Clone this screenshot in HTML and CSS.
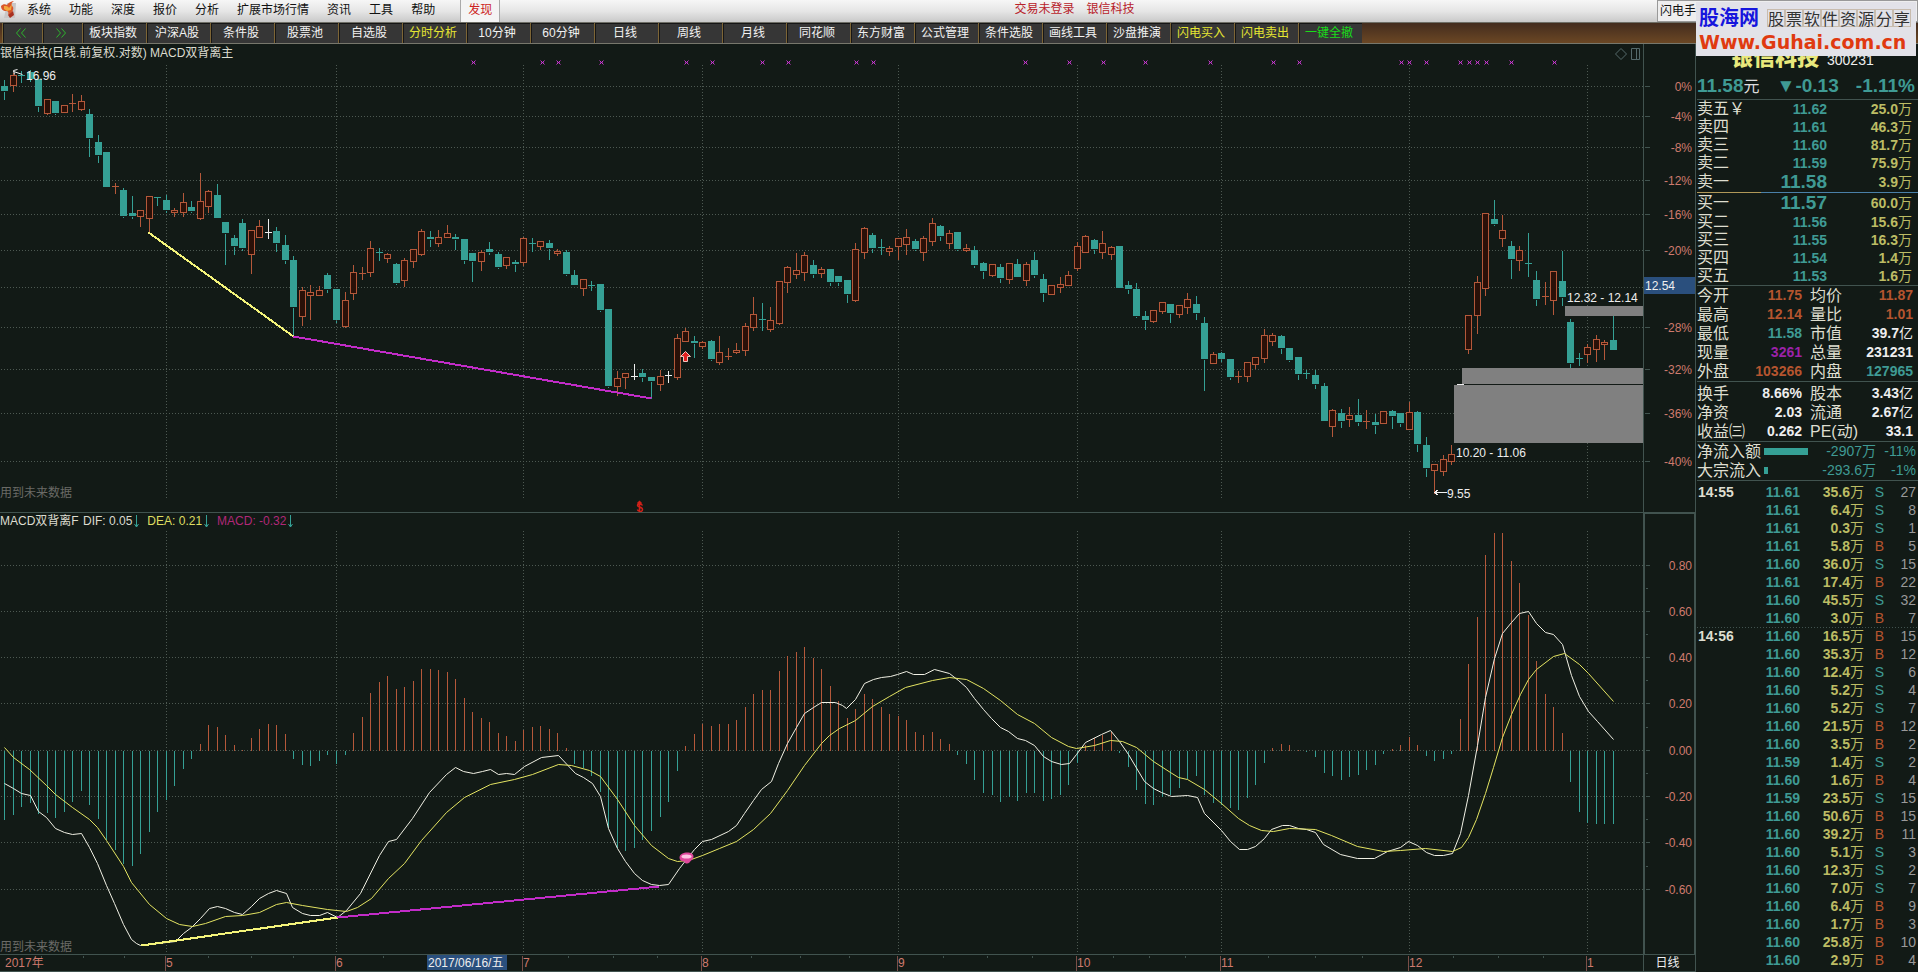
FILE: index.html
```html
<!DOCTYPE html>
<html lang="zh-CN">
<head>
<meta charset="utf-8">
<title>银信科技 300231</title>
<link rel="stylesheet" href="styles.css">
</head>
<body>
<header class="menubar">
  <svg class="logo" viewBox="0 0 18 20" aria-hidden="true">
    <path d="M7 3h9l-1 15H4z" fill="#c9c6c6"/>
    <path d="M1 6c2-2 4-2 6-1 2-3 5-4 7-4-3 2-3 4-1 6 1 3-1 6-5 8 1-3 0-4-2-4-3 0-5-2-5-5z" fill="#d9562a"/>
    <path d="M4 6c2 0 4 0 5 2l3-4-1 6-4 1-3-2z" fill="#f3a63c"/>
    <path d="M8 15l5-4 1 4-4 3z" fill="#a93020"/>
  </svg>
  <nav class="menu">
    <button>系统</button><button>功能</button><button>深度</button><button>报价</button><button>分析</button><button>扩展市场行情</button><button>资讯</button><button>工具</button><button>帮助</button>
    <button class="discover">发现</button>
  </nav>
  <div class="status"><span>交易未登录</span><span>银信科技</span></div>
  <button class="quick">闪电手</button>
</header>

<nav class="toolbar">
  <button class="arrow" aria-label="后退"><svg viewBox="0 0 12 10"><path d="M5.500.5l-4 4.500 4 4.500M10.500.5l-4 4.500 4 4.500"/></svg></button>
  <button class="arrow" aria-label="前进"><svg viewBox="0 0 12 10"><path d="M1.500.5l4 4.500-4 4.500M6.500.5l4 4.500-4 4.500"/></svg></button>
  <button>板块指数</button><button>沪深A股</button><button>条件股</button><button>股票池</button><button>自选股</button><button class="hot">分时分析</button><button>10分钟</button><button>60分钟</button><button>日线</button><button>周线</button><button>月线</button><button>同花顺</button><button>东方财富</button><button>公式管理</button><button>条件选股</button><button>画线工具</button><button>沙盘推演</button><button class="hot">闪电买入</button><button class="hot">闪电卖出</button><button class="go">一键全撤</button>
</nav>

<main class="workspace">
  <section class="charts">
    <div class="pane">
      <svg id="kline"></svg>
      <div class="caption">银信科技(日线.前复权.对数) MACD双背离主</div>
      <svg class="tools" viewBox="0 0 28 14" aria-hidden="true"><path d="M7 1.500L12.500 7 7 12.500 1.500 7zM17.500 1.500h8v11h-8zM22.500 1.500v11"/></svg>
      <div class="note">用到未来数据</div>
    </div>
    <div class="pane scale"><svg id="kscale"></svg></div>
    <div class="pane lower">
      <svg id="macd"></svg>
      <div class="caption legend">
        <span class="title">MACD双背离F</span>
        <span>DIF: 0.05<svg class="down" viewBox="0 0 7 13"><path d="M3.500 0v12M1.500 9l2 3 2-3"/></svg></span>
        <span class="dea">DEA: 0.21<svg class="down" viewBox="0 0 7 13"><path d="M3.500 0v12M1.500 9l2 3 2-3"/></svg></span>
        <span class="mac">MACD: -0.32<svg class="down" viewBox="0 0 7 13"><path d="M3.500 0v12M1.500 9l2 3 2-3"/></svg></span>
      </div>
      <div class="note">用到未来数据</div>
    </div>
    <div class="pane scale boxed"><svg id="mscale"></svg></div>
    <div class="pane dates"><svg id="dates"></svg></div>
    <div class="pane period">日线</div>
  </section>

  <aside class="quote">
    <div class="name"><b>银信科技</b><span>300231</span></div>
    <div class="last"><span>11.58<em>元</em></span><span>▼-0.13</span><span>-1.11%</span></div>
    <table class="book" id="asks"></table>
    <div class="divider"></div>
    <table class="book bids" id="bids"></table>
    <table class="stats">
      <tr><th>今开</th><td class="up">11.75</td><th>均价</th><td class="up">11.87</td></tr>
      <tr><th>最高</th><td class="up">12.14</td><th>量比</th><td class="up">1.01</td></tr>
      <tr><th>最低</th><td class="dn">11.58</td><th>市值</th><td>39.7<em>亿</em></td></tr>
      <tr><th>现量</th><td class="vio">3261</td><th>总量</th><td>231231</td></tr>
      <tr><th>外盘</th><td class="up">103266</td><th>内盘</th><td class="dn">127965</td></tr>
    </table>
    <table class="stats basics">
      <tr><th>换手</th><td>8.66%</td><th>股本</th><td>3.43<em>亿</em></td></tr>
      <tr><th>净资</th><td>2.03</td><th>流通</th><td>2.67<em>亿</em></td></tr>
      <tr><th>收益㈢</th><td>0.262</td><th>PE(动)</th><td>33.1</td></tr>
    </table>
    <table class="flow">
      <tr><th>净流入额</th><td class="meter"><i style="width:44px"></i></td><td>-2907<em>万</em></td><td>-11%</td></tr>
      <tr><th>大宗流入</th><td class="meter"><i style="width:4px"></i></td><td>-293.6<em>万</em></td><td>-1%</td></tr>
    </table>
    <div class="tape"><table id="ticks"></table></div>
  </aside>
</main>

<div class="watermark">
  <div class="brand"><b>股海网</b><span class="slogan"><i>股</i><i>票</i><i>软</i><i>件</i><i>资</i><i>源</i><i>分</i><i>享</i></span></div>
  <a href="#">Www.Guhai.com.cn</a>
</div>
<script src="charts.js"></script>
</body>
</html>
```
FILE: styles.css
```css
:root {
  --bg: #121a16;
  --line: #41534f;
  --teal: #35a095;
  --quote-teal: #3f9a94;
  --orange: #b5552f;
  --yellow: #bcbc64;
  --label: #cf7a6e;
}
* { box-sizing: border-box; }
body {
  margin: 0;
  height: 100vh;
  display: flex;
  flex-direction: column;
  overflow: hidden;
  position: relative;
  background: var(--bg);
  color: #eee;
  font: 12px/18px "Liberation Sans", "Noto Sans CJK SC", sans-serif;
}
button { font: inherit; color: inherit; background: none; border: 0; padding: 0; white-space: nowrap; }
i, em { font-style: normal; }

.menubar {
  display: flex;
  align-items: stretch;
  height: 22px;
  flex: none;
  background: linear-gradient(#f6f6f6, #e6e6e6 50%, #c9c9c9);
  color: #111;
}
.logo { width: 18px; height: 20px; }
.menu { display: flex; }
.menu button { padding: 0 9px 2px; }
.menu .discover { margin-left: 16px; padding: 0 7px 2px; border: 1px solid #aaa; border-width: 0 1px; background: #f4f4f4; color: #c22; }
.status { flex: 1; display: flex; justify-content: center; gap: 12px; color: #b8222a; padding: 0 8px 2px 0; }
.quick { width: 261px; padding: 0 2px; border: 1px solid #999; background: #eee; text-align: left; font-size: 12px; }

.toolbar {
  display: flex;
  height: 22px;
  flex: none;
  border-top: 1px solid #6e6e66;
  border-bottom: 1px solid #77776c;
  background: linear-gradient(#432c1e, #6b4724);
  padding-left: 2px;
}
.toolbar button {
  width: 64px;
  padding-right: 3px;
  background: #363636;
  border-left: 1px solid #7d6536;
  box-shadow: inset 1px 1px #161616;
  color: #f2f2f2;
}
.toolbar .arrow { width: 40px; display: grid; place-items: center; }
.arrow svg { width: 12px; height: 10px; fill: none; stroke: #2db52d; stroke-width: 1; }
.toolbar .hot { color: #e6e632; }
.toolbar .go { color: #19dd19; }

.workspace { flex: 1; min-height: 0; display: flex; }
.charts {
  flex: 1;
  min-width: 0;
  display: grid;
  grid-template-columns: minmax(0, 1fr) 53px;
  grid-template-rows: minmax(0, 468fr) minmax(0, 442fr) 18px;
}
.pane { position: relative; min-width: 0; min-height: 0; overflow: hidden; }
.pane > svg:first-child { display: block; width: 100%; height: 100%; }
.scale { border: 1px solid var(--line); border-width: 0 1px; }
.lower { border-top: 1px solid var(--line); }
.boxed { border-width: 2px 2px 0; }
.dates { border: 1px solid var(--line); border-width: 1px 0; }
.period { border: 1px solid var(--line); line-height: 16px; text-align: center; padding-right: 4px; }
.caption { position: absolute; left: 0; top: 0; color: #dcdcd0; }
.lower .caption { top: -1px; }
.legend { display: flex; gap: 7px; }
.legend span { display: flex; align-items: center; }
.legend .title { width: 76px; white-space: nowrap; }
.legend .dea { color: #dede62; }
.legend .mac { color: #b02878; }
.down { width: 7px; height: 13px; margin-left: 1px; fill: none; stroke: var(--teal); }
.note { position: absolute; left: 0; bottom: 10px; color: #6a6a66; }
.lower .note { bottom: -2px; }
.tools { position: absolute; right: 1px; top: 3px; width: 28px; height: 14px; fill: none; stroke: #55696a; }

.grid { stroke: #4d5952; stroke-dasharray: 1 2; }
.crisp { shape-rendering: crispEdges; }
.t { stroke: var(--teal); fill: var(--teal); }
.r { stroke: #b4583a; fill: #2a1008; }
.w { stroke: #eee; fill: #eee; }
.dif { stroke: #f0f0e4; fill: none; }
.deal { stroke: #e4e462; fill: none; }
.div1 { stroke: #f4f47a; stroke-width: 2; }
.div2 { stroke: #c22cc8; stroke-width: 2; }
.gap { fill: #808080; }
.mark { stroke: #c436cc; fill: none; }
.white { fill: #eee; }
.arrowl { stroke: #eee; fill: none; }
.axis { fill: var(--label); }
.tick { stroke: var(--line); }
.monthline { stroke: #7a4f48; }
.sel { fill: #2a4f7d; }

.quote { width: 222px; flex: none; padding-left: 1px; display: flex; flex-direction: column; overflow: hidden; font-size: 14px; font-weight: bold; }
.quote table { border-collapse: separate; border-spacing: 0; table-layout: fixed; width: 100%; }
.quote th { font-size: 16px; font-weight: normal; text-align: left; padding: 0; white-space: nowrap; color: #deded0; }
.quote td { padding: 0; text-align: right; white-space: nowrap; }
.quote em { font-size: 14px; font-weight: normal; }
.name { height: 27px; padding-left: 34px; display: flex; gap: 8px; align-items: flex-start; line-height: 28px; }
.name b { font-size: 22px; color: #e8e87c; }
.name span { font-weight: normal; line-height: 32px; }
.last { height: 29px; padding-right: 3px; display: flex; justify-content: space-between; font-size: 19px; line-height: 30px; color: var(--quote-teal); border-bottom: 1px solid var(--line); }
.quote .last em { color: #ddd; font-size: 16px; }
.book tr { height: 18px; line-height: 18px; }
.book td:nth-child(2) { width: 70px; color: var(--quote-teal); }
.book td:last-child { width: 91px; padding-right: 6px; color: var(--yellow); }
.book th { width: 60px; }
.book .best td:nth-child(2) { font-size: 19px; }
.book .best { height: 20px; line-height: 20px; }
.divider { height: 1px; flex: none; background: linear-gradient(90deg, #b09858 29%, #4a80a8 29%); }
.bids, .stats, .flow { border-bottom: 1px solid var(--line); }
.basics { margin-top: 2px; }
.stats tr, .flow tr { height: 19px; line-height: 19px; }
.stats th:first-child { width: 48px; }
.stats td:nth-child(2) { width: 57px; }
.stats th:nth-child(3) { padding-left: 8px; width: 60px; }
.stats td:last-child { padding-right: 5px; }
.up { color: var(--orange); }
.dn { color: var(--quote-teal); }
.vio { color: #9b22a8; }
.flow { color: var(--quote-teal); }
.flow th { width: 67px; }
.flow .meter { width: 44px; text-align: left; }
.meter i { display: block; height: 7px; background: var(--teal); }
.flow td:nth-child(3) { width: 68px; }
.flow td, .count { font-weight: normal; }
.flow td:last-child, .tape td:last-child { padding-right: 2px; }
.tape { flex: 1; min-height: 0; overflow: hidden; padding-top: 2px; }
.tape tr { height: 18px; line-height: 18px; }
.tape .minute { background: repeating-linear-gradient(90deg, var(--line) 0 1px, transparent 1px 3px) top / 100% 1px no-repeat; }
.tape th { width: 50px; font-size: 14px; font-weight: bold; padding-left: 1px; }
.tape td:nth-child(2) { width: 53px; color: var(--quote-teal); }
.tape td:nth-child(3) { width: 64px; color: var(--yellow); }
.tape td:nth-child(4) { width: 20px; font-weight: normal; }
.tape .count { color: #999; }

.watermark { position: absolute; right: 2px; top: 2px; width: 220px; height: 54px; padding: 2px 3px; background: #e2e2e8; }
.brand { display: flex; align-items: center; gap: 8px; height: 28px; }
.brand b { font-size: 20px; color: #1616dd; white-space: nowrap; }
.slogan { display: flex; color: #333; }
.slogan i { width: 18px; height: 18px; border: 1px solid #c8bcae; font: 16px/16px "Noto Sans CJK SC", sans-serif; }
.watermark a { display: block; font: bold 19px/20px "DejaVu Sans", sans-serif; color: #e03a10; text-decoration: none; }
```
FILE: charts.js
```js
// Daily bars: colour, high, body top, body bottom, low (plot units)
const bars = `t79,86,91,99 r72,75,85,91 t70,75,76,82 t69,72,79,81 t79,79,106,111 r99,99,113,114 t101,101,113,114 r104,105,112,112 r93,103,104,111 r94,101,109,110
t108,114,138,156 t134,142,155,162 t151,152,187,187 r182,186,187,193 t187,190,216,217 t195,213,216,218 r210,210,216,226 r196,196,218,232 t196,197,198,205 t194,200,210,212
r207,210,212,216 r192,202,212,216 t200,207,211,212 r172,201,218,219 r189,191,206,212 t183,195,218,218 t222,222,233,264 t234,238,246,254 t218,223,248,250 r229,230,254,273
r219,226,237,237 w218,232,233,238 t226,231,243,251 t234,245,260,263 t255,260,307,336 r286,290,316,325 r284,292,295,319 r285,290,295,295 t272,275,289,292 t288,289,320,322
r291,300,326,327 r264,272,293,299 r266,273,274,279 r240,248,272,276 t247,252,253,260 r252,254,258,262 t262,264,283,284 r257,260,280,286 r248,249,261,267 r228,231,254,255
t230,237,239,246 r229,237,243,246 r224,233,237,237 t233,237,239,249 t238,239,260,263 t253,253,261,281 r249,252,261,270 t241,249,252,254 t251,254,267,268 r256,257,265,268
t259,262,264,271 r236,238,262,265 t237,243,244,251 r240,241,246,249 t239,243,248,259 r248,251,253,255 t249,252,274,275 t269,275,285,285 r279,279,288,295 t280,285,286,290
t284,284,310,311 t309,309,386,387 r370,378,386,395 r372,373,377,388 w363,376,377,379 t368,373,377,381 t377,377,381,398 r369,376,384,390 w370,375,376,382 r333,338,377,379
r327,331,341,341 t335,341,343,357 r340,342,346,348 t339,341,359,360 r335,352,362,364 r347,356,357,359 r342,350,352,353 r322,326,350,355 r296,314,327,330 t302,319,320,330
r306,320,329,331 r280,281,323,324 r265,267,282,292 r252,270,274,278 r251,255,272,280 t259,265,274,277 r266,269,273,277 t269,269,282,285 t276,276,282,285 t280,280,294,302
r242,249,300,301 r226,228,252,258 t232,235,248,252 t238,247,248,254 r245,248,251,255 r238,238,246,259 r228,237,244,254 t238,241,249,250 r235,238,252,260 r217,223,241,245
t224,226,236,240 r229,233,243,248 t232,232,249,250 r243,248,250,251 t245,250,265,267 t261,263,271,278 r264,264,275,276 t263,267,278,282 r262,263,279,283 t258,264,277,277
r261,264,280,285 t251,260,275,277 t273,279,293,301 r284,285,294,294 r276,284,287,292 r270,275,285,285 r241,246,268,270 r234,236,252,252 t238,240,249,253 r230,243,252,258
r245,247,254,259 t246,246,288,288 t280,285,289,293 t282,289,316,317 t310,316,320,329 r310,310,321,322 r302,302,311,313 t304,304,313,322 r304,305,314,317 r292,299,307,313
t295,304,313,319 t316,323,359,390 r351,354,363,363 t351,353,359,361 t359,359,377,379 r370,376,377,382 r361,362,376,381 r357,357,364,368 r328,335,358,362 r332,335,341,345
t334,336,348,353 t347,348,360,361 t357,357,374,379 t369,373,374,378 t369,375,384,388 t382,386,421,421 r408,410,426,436 t408,413,421,427 r406,415,419,426 t398,415,422,425
r409,421,422,428 t413,422,425,433 r411,411,423,423 t409,411,416,428 t413,413,423,426 r401,412,429,429 t410,412,444,451 t436,445,468,476 r463,464,470,493 r454,459,471,475
r444,454,461,464 w384,384,385,385 r314,315,349,353 r275,282,315,333 r212,213,288,295 t199,219,224,225 r214,230,238,246 t240,246,259,278 r245,250,260,270 t232,263,264,276
t270,280,299,305 r281,296,297,304 r270,271,300,314 t250,281,297,305 t318,322,363,367 t352,358,359,365 r343,347,354,362 r334,339,349,361 r339,342,344,359 t315,340,350,350`.split(/\s+/)
  .map(s => [s[0], ...s.slice(1).split(',').map(Number)]);

const hist = [-69,-64,-56,-52,-63,-62,-67,-61,-51,-40,-54,-68,-89,-99,-113,-115,-103,-81,-61,-49,-35,-18,-8,7,26,24,16,6,1,13,22,27,26,17,-8,-14,-15,-10,-4,-13,-4,
18,34,58,69,75,62,64,70,82,82,81,79,72,53,39,33,29,18,15,10,21,24,25,22,18,3,-13,-17,-25,-41,-77,-97,-100,-97,-89,-80,-66,-51,-20,5,17,
27,25,27,27,31,44,57,61,61,80,95,99,104,93,82,65,50,33,42,57,52,44,37,35,31,19,16,19,12,7,-4,-13,-29,-42,-44,-51,-46,-50,-42,-42,-50,-48,-44,-34,-12,
6,13,16,19,-2,-16,-39,-53,-54,-46,-44,-37,-28,-25,-44,-52,-54,-57,-59,-47,-34,-12,3,7,6,1,-1,-6,-22,-25,-29,-26,-24,-19,-14,-3,2,6,14,6,-5,-10,-8,-3,
32,87,134,196,218,218,190,168,136,90,57,44,18,-31,-61,-72,-73,-73,-73];

const difLine = `4,783 13,788 21,793 30,795 38,811 46,817 55,828 64,832 72,834 81,833 89,847 97,863 106,885 114,903 123,924 131,939 136,943 140,945 166,942 175,941 183,933 191,927 200,918 209,908 217,906 225,908 234,912 242,914 251,906 259,898 268,893 276,890 286,893 292,907 302,913 310,915 319,915 327,912 337,917 346,910 360,893 379,855 388,841 396,839 412,818 429,792 446,774 455,767 463,771 473,773 482,771 490,769 498,774 506,773 514,774 524,766 541,757 558,755 575,773 583,777 592,783 600,796 608,828 617,848 625,861 634,873 642,880 651,884 659,885 668,884 679,868 686,859 694,849 702,841 711,839 728,831 736,825 744,813 753,800 761,789 771,781 778,763 787,743 796,727 804,713 813,707 821,702 835,702 842,705 846,708 855,699 864,683 873,679 881,677 890,676 897,674 906,671 913,674 924,674 934,669 949,673 958,680 966,687 974,698 983,709 991,718 1000,727 1008,731 1017,738 1025,740 1034,745 1043,756 1051,761 1061,764 1069,763 1076,754 1085,742 1101,734 1110,730 1119,741 1128,754 1144,781 1153,788 1161,792 1171,796 1187,795 1197,797 1204,813 1221,830 1230,841 1239,849 1247,849 1255,846 1264,838 1271,829 1282,825 1289,825 1298,828 1306,829 1315,832 1323,844 1340,854 1357,858 1374,858 1387,851 1400,847 1408,841 1417,845 1426,852 1434,855 1443,855 1452,853 1460,833 1468,795 1477,745 1485,697 1494,658 1502,633 1511,622 1519,613 1528,611 1536,623 1545,632 1553,634 1562,644 1571,675 1579,696 1588,711 1597,721 1613,739`;
const deaLine = `4,747 13,757 29,769 46,785 55,794 72,807 89,819 97,827 106,840 123,866 131,882 149,904 166,918 179,924 192,926 205,923 225,916 242,915 259,912 276,904 286,902 302,905 327,909 346,911 357,907 371,898 388,878 404,863 421,840 446,812 464,797 490,784 514,779 532,774 558,764 571,765 589,770 600,776 617,799 634,825 651,845 668,858 677,861 688,860 702,855 719,848 736,841 753,829 770,813 787,790 804,765 821,743 829,735 839,728 855,720 872,706 889,696 905,687 932,680 949,677 966,679 983,688 1000,700 1017,714 1034,723 1051,737 1068,746 1076,748 1094,745 1110,740 1122,741 1136,747 1153,761 1170,772 1178,777 1187,779 1204,789 1221,803 1238,818 1249,825 1261,830 1273,831 1289,828 1315,829 1331,835 1357,846 1383,851 1400,850 1425,848 1452,851 1461,847 1468,837 1476,819 1485,793 1493,767 1502,737 1511,714 1520,694 1528,679 1536,669 1553,656 1564,653 1579,664 1588,673 1613,701`;

const signals = [473,542,558,601,686,712,762,788,856,873,1025,1069,1103,1145,1210,1273,1299,1401,1409,1426,1460,1469,1477,1486,1511,1554];
const months = [[19,'5'],[39,'6'],[61,'7'],[82,'8'],[105,'9'],[126,'10'],[143,'11'],[165,'12'],[186,'1']];
const percents = [86,116,147,180,214,250,287,327,369,413,461];
const levels = [[565,'0.80'],[611,'0.60'],[657,'0.40'],[703,'0.20'],[750,'0.00'],[796,'-0.20'],[842,'-0.40'],[889,'-0.60']];
const barX = i => 4 + i * 8.513;

// Maps plot units onto the current size of an svg
function surface(id, top, width, height) {
  const el = document.getElementById(id);
  const kx = el.clientWidth / width, ky = el.clientHeight / height;
  const X = v => Math.round(v * kx) + 0.5;
  const Y = v => Math.round((v - top) * ky) + 0.5;
  const out = [];
  return {
    X, Y, out,
    line: (x1, y1, x2, y2, c) => out.push(`<line class="${c}" x1="${X(x1)}" y1="${Y(y1)}" x2="${X(x2)}" y2="${Y(y2)}"/>`),
    text: (x, y, s, c, a = 'start') => out.push(`<text class="${c}" x="${X(x) - 0.5}" y="${Y(y) - 0.5}" text-anchor="${a}">${s}</text>`),
    poly: (pts, c) => out.push(`<polyline class="${c}" points="${pts.split(' ').map(p => { const [x, y] = p.split(','); return X(x) + ',' + Y(y); }).join(' ')}"/>`),
    box: (x1, y1, x2, y2, c) => out.push(`<rect class="${c}" x="${X(x1) - 0.5}" y="${Y(y1) - 0.5}" width="${X(x2) - X(x1)}" height="${Y(y2) - Y(y1)}"/>`),
    flush: () => { el.innerHTML = out.join(''); }
  };
}

function drawKline() {
  const s = surface('kline', 44, 1643, 468);
  percents.forEach(y => s.line(0, y, 1643, y, 'grid crisp'));
  months.forEach(([i]) => s.line(barX(i), 64, barX(i), 498, 'grid crisp'));
  signals.forEach(x => {
    const a = s.X(x), b = s.Y(62);
    s.out.push(`<path class="mark" d="M${a - 2} ${b - 2}l4 4m0-4l-4 4M${a - 1} ${b}h2"/>`);
  });
  bars.forEach(([c, h, t, b, l], i) => {
    const x = s.X(barX(i));
    s.out.push(`<g class="${c} crisp">`);
    if (b - t <= 1) {
      s.out.push(`<path d="M${x - 3.5} ${s.Y(t)}h7M${x} ${s.Y(h)}V${s.Y(l)}"/>`);
    } else {
      s.out.push(`<path d="M${x} ${s.Y(h)}V${s.Y(t)}M${x} ${s.Y(b)}V${s.Y(l)}"/><rect x="${x - 3}" y="${s.Y(t)}" width="6" height="${Math.max(1, s.Y(b) - s.Y(t) - (c === 't' ? 1 : 0))}"/>`);
    }
    s.out.push('</g>');
  });
  s.line(148, 232, 293, 336, 'div1 crisp');
  s.line(293, 336, 651, 398, 'div2 crisp');
  s.box(1565, 306, 1643, 316, 'gap');
  s.box(1462, 368, 1643, 384, 'gap');
  s.box(1454, 385, 1643, 443, 'gap');
  s.text(1567, 302, '12.32 - 12.14', 'white');
  s.text(1456, 457, '10.20 - 11.06', 'white');
  s.text(1447, 498, '9.55', 'white');
  s.text(26, 80, '16.96', 'white');
  s.out.push(`<path class="arrowl crisp" d="M${s.X(1434)} ${s.Y(492)}h12m-8-3l-4 3 4 3"/>`);
  s.out.push(`<path class="arrowl" d="M${s.X(22)} ${s.Y(74)}l-9-3m4-2l-4 1 1 4"/>`);
  s.out.push(`<path d="M${s.X(685)} ${s.Y(351)}l5 5h-3v5h-4v-5h-3z" fill="#e02020" stroke="#f3c8c0"/>`);
  s.out.push(`<path d="M${s.X(642)} ${s.Y(505)}c-1-2-5-2-5 0s5 1 5 4-5 2-5 0M${s.X(639)} ${s.Y(501)}v10m-2-8l2-2 2 2" fill="none" stroke="#d02018" stroke-width="1.500"/>`);
  s.flush();
}

function drawKscale() {
  const s = surface('kscale', 44, 51, 468);
  percents.forEach((y, i) => {
    s.line(0, y, 5, y, 'tick crisp');
    if (i !== 6) s.text(48, y + 5, i ? `-${i * 4}%` : '0%', 'axis', 'end');
  });
  s.box(0, 277, 51, 294, 'sel');
  s.text(1, 290, '12.54', 'white');
  s.flush();
}

function drawMacd() {
  const s = surface('macd', 513, 1643, 441);
  levels.forEach(([y]) => s.line(0, y, 1643, y, 'grid crisp'));
  months.forEach(([i]) => s.line(barX(i), 530, barX(i), 954, 'grid crisp'));
  hist.forEach((v, i) => s.line(barX(i), 750, barX(i), 750 - v, (v > 0 ? 'r' : 't') + ' crisp'));
  s.poly(difLine, 'dif');
  s.poly(deaLine, 'deal');
  s.line(141, 945, 337, 917, 'div1 crisp');
  s.line(337, 917, 659, 886, 'div2 crisp');
  const x = s.X(686), y = s.Y(857);
  s.out.push(`<path d="M${x - 7} ${y}c0-6 14-7 14-1 0 3-3 4-4 6-2 2-5 1-5-1-2 0-5-1-5-4z" fill="#e0489c"/><ellipse cx="${x}" cy="${y - 1}" rx="5" ry="2" fill="#ffc4e4"/>`);
  s.flush();
}

function drawMscale() {
  const s = surface('mscale', 514, 49, 440);
  levels.forEach(([y, label], i) => {
    s.line(0, y, 4, y, 'tick crisp');
    if (i) s.line(0, y - 23, 2, y - 23, 'tick crisp');
    s.text(47, y + 5, label, 'axis', 'end');
  });
  s.flush();
}

function drawDates() {
  const s = surface('dates', 955, 1643, 16);
  s.text(5, 967, '2017年', 'axis');
  let prev = 0;
  months.forEach(([i, label]) => {
    const x = barX(i);
    [1, 2, 3].forEach(q => s.line(prev + (x - prev) * q / 4, 955, prev + (x - prev) * q / 4, 957, 'tick crisp'));
    s.line(x - 1, 955, x - 1, 970, 'monthline crisp');
    s.text(x, 967, label, 'axis');
    prev = x;
  });
  s.box(427, 955, 507, 970, 'sel');
  s.text(428, 967, '2017/06/16/五', 'white');
  s.flush();
}

function drawAll() { drawKline(); drawKscale(); drawMacd(); drawMscale(); drawDates(); }
addEventListener('resize', drawAll);
drawAll();

const book = (id, rows, best) => {
  document.getElementById(id).innerHTML = rows.map(([n, p, v], i) =>
    `<tr${i === best ? ' class="best"' : ''}><th>${n}</th><td>${p}</td><td>${v}<em>万</em></td></tr>`).join('');
};
book('asks', [['卖五￥', '11.62', '25.0'], ['卖四', '11.61', '46.3'], ['卖三', '11.60', '81.7'], ['卖二', '11.59', '75.9'], ['卖一', '11.58', '3.9']], 4);
book('bids', [['买一', '11.57', '60.0'], ['买二', '11.56', '15.6'], ['买三', '11.55', '16.3'], ['买四', '11.54', '1.4'], ['买五', '11.53', '1.6']], 0);

const trades = `61 35.6 S 27|61 6.4 S 8|61 0.3 S 1|61 5.8 B 5|60 36.0 S 15|61 17.4 B 22|60 45.5 S 32|60 3.0 B 7|60 16.5 B 15|60 35.3 B 12|60 12.4 S 6|60 5.2 S 4|60 5.2 S 7|60 21.5 B 12|60 3.5 B 2|59 1.4 S 2|60 1.6 B 4|59 23.5 S 15|60 50.6 B 15|60 39.2 B 11|60 5.1 S 3|60 12.3 S 2|60 7.0 S 7|60 6.4 B 9|60 1.7 B 3|60 25.8 B 10|60 2.9 B 4`;
document.getElementById('ticks').innerHTML = trades.split('|').map((row, i) => {
  const [p, v, side, n] = row.split(' ');
  const time = { 0: '14:55', 8: '14:56' }[i] || '';
  return `<tr${i === 8 ? ' class="minute"' : ''}><th>${time}</th><td>11.${p}</td><td>${v}<em>万</em></td><td class="${side === 'S' ? 'dn' : 'up'}">${side}</td><td class="count">${n}</td></tr>`;
}).join('');
```
